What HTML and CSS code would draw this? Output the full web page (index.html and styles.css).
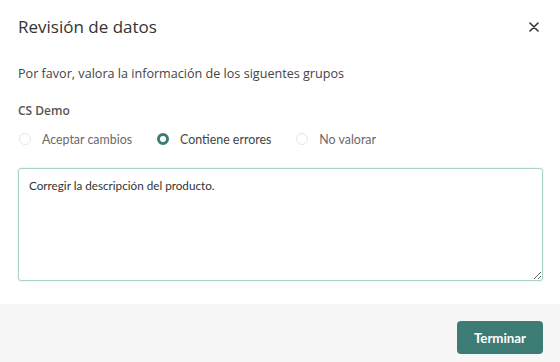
FILE: index.html
```html
<!DOCTYPE html>
<html lang="es">
<head>
<meta charset="utf-8">
<link rel="stylesheet" href="styles.css">
</head>
<body>
<div class="modal">
  <header class="modal-header">
    <h1 class="modal-title">Revisión de datos</h1>
    <button class="close" aria-label="Cerrar">
      <svg width="10" height="10" viewBox="0 0 10 10"><path d="M1 1L9 9M9 1L1 9" stroke="#333" stroke-width="1.6" stroke-linecap="round"/></svg>
    </button>
  </header>
  <div class="modal-body">
    <p class="intro">Por favor, valora la información de los siguentes grupos</p>
    <div class="group-name">CS Demo</div>
    <div class="radios">
      <label class="radio"><span class="dot"></span>Aceptar cambios</label>
      <label class="radio checked"><span class="dot"></span>Contiene errores</label>
      <label class="radio"><span class="dot"></span>No valorar</label>
    </div>
    <textarea class="notes">Corregir la descripción del producto.</textarea>
  </div>
  <footer class="modal-footer">
    <button class="btn-primary">Terminar</button>
  </footer>
</div>
</body>
</html>
```
FILE: styles.css
```css
* { box-sizing: border-box; }
html, body { margin: 0; padding: 0; background: #fff; }
body { font-family: "Open Sans", "Liberation Sans", sans-serif; color: #333; }
.modal { width: 560px; height: 362px; display: flex; flex-direction: column; }
.modal-header {
  display: flex; align-items: center; justify-content: space-between;
  padding: 13px 21px 0 18px; height: 41px;
}
.modal-title { margin: 0; font-size: 17px; font-weight: 400; color: #333; line-height: 26px; }
.close { border: 0; background: none; padding: 0; width: 10px; height: 10px; display: flex; cursor: pointer; }
.modal-body { padding: 0 17px 0 18px; flex: 1; }
.intro { margin: 24px 0 0; font-size: 12.6px; color: #444; line-height: 18px; }
.group-name { margin-top: 19px; font-size: 12px; font-weight: 600; color: #555; line-height: 18px; }
.radios { display: flex; margin-top: 10px; height: 18px; align-items: center; }
.radio { display: flex; align-items: center; font-family: "Lato", sans-serif; font-size: 12.4px; color: #6a6a6a; margin-right: 24px; }
.radio .dot { width: 12px; height: 12px; border-radius: 50%; border: 1px solid #e6e6e6; margin-right: 11px; margin-left: 1px; }
.radio.checked .dot { border: 3.5px solid #3b7c74; }
.radio.checked { color: #444; }
.notes {
  display: block; margin-top: 20px; width: 525px; height: 113px;
  border: 1px solid #a7d3cc; border-radius: 3px; padding: 7px 10px;
  font-family: "Lato", sans-serif; font-size: 11.7px; color: #333; line-height: 18px;
  box-shadow: 0 0 0 1px rgba(167,211,204,0.15); resize: vertical; outline: none;
}
.modal-footer {
  background: #f7f7f7; height: 58px; display: flex; justify-content: flex-end;
  align-items: flex-start; padding: 17px 17px 0 0;
}
.btn-primary {
  width: 86px; height: 33px; border: 0; border-radius: 4px; background: #3c7c75;
  color: #fff; font-family: "Lato", sans-serif; font-weight: 700; font-size: 13.3px;
}
```
